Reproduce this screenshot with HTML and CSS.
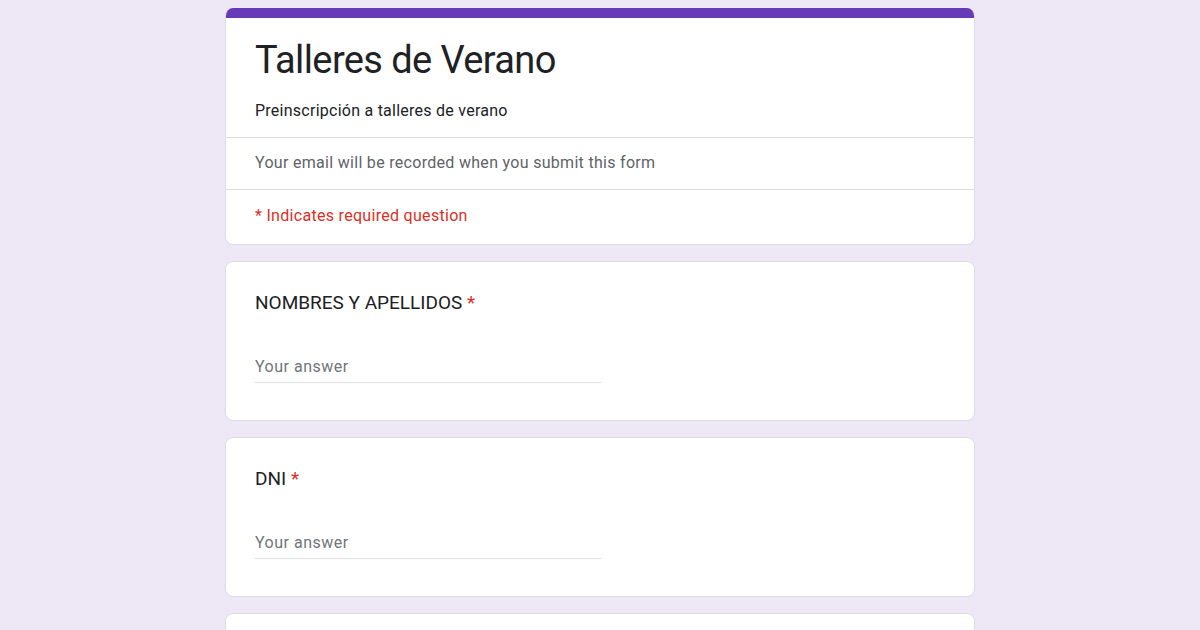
FILE: index.html
```html
<!DOCTYPE html>
<html lang="es">
<head>
  <meta charset="UTF-8">
  <title>Talleres de Verano</title>
  <meta name="viewport" content="width=device-width, initial-scale=1.0">
  <link rel="stylesheet" href="styles.css">
</head>
<body>
  <div class="form">
    <!-- Header card -->
    <div class="card header-card">
      <div class="accent"></div>
      <div class="header">
        <div class="title">Talleres de Verano</div>
        <div class="description">Preinscripción a talleres de verano</div>
      </div>
      <div class="notice">Your email will be recorded when you submit this form</div>
      <div class="required-note">* Indicates required question</div>
    </div>

    <!-- Questions -->
    <div class="card question">
      <div class="q-title">NOMBRES Y APELLIDOS <span class="star">*</span></div>
      <div class="answer">
        <input type="text" placeholder="Your answer">
      </div>
    </div>

    <div class="card question">
      <div class="q-title">DNI <span class="star">*</span></div>
      <div class="answer">
        <input type="text" placeholder="Your answer">
      </div>
    </div>

    <div class="card question"></div>
  </div>
</body>
</html>
```

FILE: styles.css
```css
* {
  box-sizing: border-box;
}

html, body {
  margin: 0;
  padding: 0;
  background: #ede7f6;
  font-family: Roboto, "Liberation Sans", sans-serif;
  color: #202124;
}

.form {
  width: 750px;
  margin: 0 auto;
  padding-top: 8px;
  display: flex;
  flex-direction: column;
  gap: 16px;
}

.card {
  background: #fff;
  border: 1px solid #dadce0;
  border-radius: 8px;
  overflow: hidden;
}

.header-card {
  border-top: none;
}

.accent {
  height: 10px;
  background: #673ab7;
  margin: 0 -1px;
}

.header {
  padding: 18px 29px 14px;
  border-bottom: 1px solid #dadce0;
}

.title {
  font-family: Roboto, sans-serif;
  font-size: 38px;
  line-height: 48px;
  color: #202124;
  letter-spacing: -0.6px;
}

.description {
  margin-top: 15px;
  font-size: 16px;
  line-height: 24px;
  letter-spacing: 0.25px;
}

.notice {
  padding: 13px 29px 14px;
  font-size: 16px;
  line-height: 24px;
  letter-spacing: 0.3px;
  color: #5f6368;
  border-bottom: 1px solid #dadce0;
}

.required-note {
  padding: 14px 29px 16px;
  font-size: 16px;
  line-height: 24px;
  letter-spacing: 0.3px;
  color: #d93025;
}

.question {
  height: 160px;
  padding: 28px 29px 0;
}

.q-title {
  font-size: 19px;
  line-height: 26px;
  color: #202124;
}

.star {
  color: #d93025;
}

.answer {
  margin-top: 39px;
  width: 346px;
  border-bottom: 1px solid #e0e0e0;
  padding-bottom: 3px;
}

.answer input {
  width: 100%;
  border: none;
  outline: none;
  padding: 0;
  font-family: Roboto, sans-serif;
  font-size: 16px;
  line-height: 24px;
  height: 24px;
  letter-spacing: 0.5px;
  color: #202124;
  background: transparent;
}

.answer input::placeholder {
  color: #70757a;
}
```
